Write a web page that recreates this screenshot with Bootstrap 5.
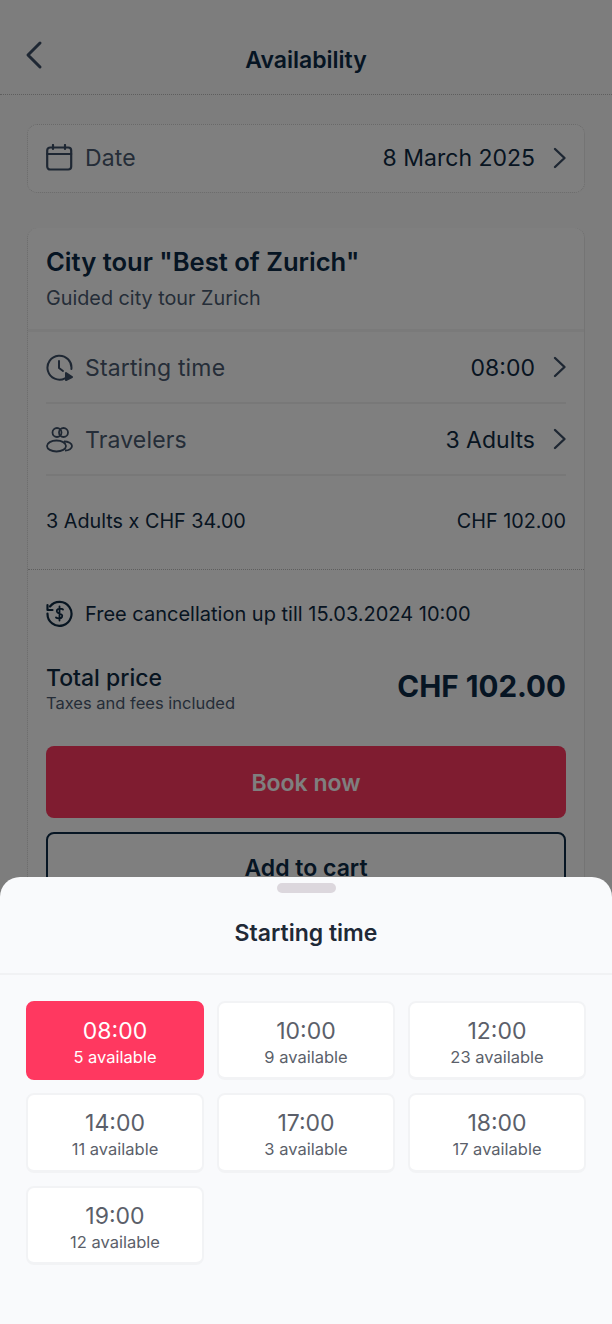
<!DOCTYPE html>
<html lang="en"><head><meta charset="utf-8"><title>Availability</title>
<link href="https://cdn.jsdelivr.net/npm/bootstrap@5.3.0/dist/css/bootstrap.min.css" rel="stylesheet">
<style>
html,body{height:1324px;overflow:hidden}
body{font-family:Inter,"Liberation Sans",sans-serif;background:#fafafa;color:#0f2a43;position:relative;width:612px}
.app-head{height:95px;border-bottom:1px dotted #bdbdbd;position:relative;padding-top:44px}
.app-head h1{font-size:23px;font-weight:600;line-height:32px;margin:0;text-align:center;color:#0c2a46}
.back{position:absolute;left:24px;top:40px}
.panel{margin:0 27px;background:#fff;border:1px dotted #d2d2d2;border-radius:10px}
.date-panel{margin-top:29px;height:69px;padding:0 18px 2px}
.tour-panel{margin-top:35px;height:700px;border-top-style:none}
.lbl{font-size:23px;color:#4a5a70;margin-left:12px;line-height:1;padding-top:2px;letter-spacing:.15px}
.val{font-size:23px;color:#0f2a43;line-height:1;padding-top:2px}
.chev{margin:0 -1px 0 18px}
.rowline{height:72px;margin:0 18px;border-bottom:2px solid #f1f1f1}
.tour-head{height:104px;padding:19px 18px 0;border-bottom:3px solid #f5f5f5}
.tour-head h2{font-size:25.6px;font-weight:600;margin:0;line-height:30px;color:#0c2a46}
.tour-head p{font-size:19.8px;margin:9px 0 0;color:#4a5a70;line-height:24px}
.calc{height:94px;border-bottom:1px dotted #bdbdbd;padding:0 18px 0;font-size:19.8px;color:#0f2a43}
.calc>div{height:92px}
.cancel{padding:0 18px;height:87px;font-size:20px;color:#0f2a43}
.cancel span{margin-left:12px}
.tot{padding:8px 18px 0;height:89px}
.tot b{font-weight:450;font-size:23px;line-height:26px;display:block}
.tot small{font-size:16.5px;color:#4a5a70;line-height:25px;display:block}
.tot strong{font-size:29.6px;font-weight:700;color:#0c2a46;line-height:26px;margin-top:8px}
.act{margin:0 18px;height:72px;border-radius:8px;font-size:23px;font-weight:600;line-height:74px;text-align:center}
.act-book{background:#ff3860;color:#fff}
.act-cart{margin-top:14px;border:2px solid #0c2a46;color:#0c2a46;line-height:68px}
.dim{position:absolute;inset:0;background:rgba(0,0,0,.5)}
.sheet{position:absolute;left:0;right:0;top:877px;bottom:0;background:#f9fafc;border-radius:20px 20px 0 0}
.grip{width:59px;height:10px;border-radius:5px;background:#dcd7dd;margin:6px auto 0}
.sheet h3{font-size:23px;font-weight:600;line-height:32px;text-align:center;color:#1f2937;margin:24px 0 0;padding-bottom:24px;border-bottom:2px solid #f1f2f4}
.slots{display:grid;grid-template-columns:repeat(3,1fr);grid-auto-rows:79.5px;gap:13px;padding:25.700px 26px 0}
.slot{background:#fff;border:2px solid #f2f3f5;border-bottom-width:3px;border-radius:8px;text-align:center;color:#5b5f6a;padding-top:14px}
.slot b{display:block;font-weight:400;font-size:23px;line-height:28px}
.slot i{display:block;font-style:normal;font-size:16.5px;line-height:24px}
.slot.on{background:#ff3860;border-color:#ff3860;color:#fff}
</style></head><body>
<div class="app-head"><svg class="back" width="20" height="30" viewBox="0 0 20 30" fill="none" stroke="#3d4f66" stroke-width="3" stroke-linecap="round" stroke-linejoin="round"><path d="M16 3 4 15l12 12"/></svg><h1>Availability</h1></div>
<div class="panel date-panel d-flex align-items-center">
<svg width="27" height="27" viewBox="0 0 27 27" fill="none" stroke="#3d4f66" stroke-width="2.2" stroke-linecap="round"><rect x="1.2" y="3.5" width="24" height="22" rx="3"/><path d="M1.2 10h24M7 1v4M19 1v4"/></svg>
<span class="lbl">Date</span><span class="val ms-auto">8 March 2025</span>
<svg class="chev" width="14" height="22" viewBox="0 0 14 22" fill="none" stroke="#3d4f66" stroke-width="2.4" stroke-linecap="round" stroke-linejoin="round"><path d="m2 2 9.500 9-9.500 9"/></svg></div>
<div class="panel tour-panel">
<div class="tour-head"><h2>City tour "Best of Zurich"</h2><p>Guided city tour Zurich</p></div>
<div class="rowline d-flex align-items-center">
<svg width="27" height="27" viewBox="0 0 27 27" fill="none" stroke="#3d4f66" stroke-width="2" stroke-linecap="round" stroke-linejoin="round"><path d="M19 24.300A12 12 0 1 1 25.400 15"/><path d="M13 7v7l4 3"/><path d="M20 19l6 4-6 3z" fill="#3d4f66"/></svg>
<span class="lbl">Starting time</span><span class="val ms-auto">08:00</span>
<svg class="chev" width="14" height="22" viewBox="0 0 14 22" fill="none" stroke="#3d4f66" stroke-width="2.4" stroke-linecap="round" stroke-linejoin="round"><path d="m2 2 9.500 9-9.500 9"/></svg></div>
<div class="rowline d-flex align-items-center">
<svg width="27" height="27" viewBox="0 0 27 27" fill="none" stroke="#3d4f66" stroke-width="1.800"><circle cx="11" cy="6.500" r="4.500"/><circle cx="17.500" cy="6.500" r="4.500"/><ellipse cx="10.500" cy="20" rx="9.500" ry="5.500"/><path d="M18 15.500c4.500 0 8 2 8 4.500s-3 4.500-7 4.500"/></svg>
<span class="lbl">Travelers</span><span class="val ms-auto">3 Adults</span>
<svg class="chev" width="14" height="22" viewBox="0 0 14 22" fill="none" stroke="#3d4f66" stroke-width="2.4" stroke-linecap="round" stroke-linejoin="round"><path d="m2 2 9.500 9-9.500 9"/></svg></div>
<div class="calc"><div class="d-flex align-items-center justify-content-between"><span>3 Adults x CHF 34.00</span><span>CHF 102.00</span></div></div>
<div class="cancel d-flex align-items-center">
<svg width="27" height="27" viewBox="0 0 27 27" fill="none" stroke="#0f2a43" stroke-width="2.2" stroke-linecap="round" stroke-linejoin="round"><path d="M4 6.500A12 12 0 1 1 1.500 13.500"/><path d="M1.500 5v5h5"/><path d="M17 9.500c-1-1-5-1.500-6 .5s1 3 2.500 3.500 3.500 1.500 2.500 3.500-5 1.500-6 .5M13.500 6.500v14" stroke-width="1.800"/></svg>
<span>Free cancellation up till 15.03.2024 10:00</span></div>
<div class="tot d-flex justify-content-between"><div><b>Total price</b><small>Taxes and fees included</small></div><strong>CHF 102.00</strong></div>
<div class="act act-book">Book now</div>
<div class="act act-cart">Add to cart</div>
</div>
<div class="dim"></div>
<div class="sheet"><div class="grip"></div><h3>Starting time</h3>
<div class="slots">
<div class="slot on"><b>08:00</b><i>5 available</i></div>
<div class="slot"><b>10:00</b><i>9 available</i></div>
<div class="slot"><b>12:00</b><i>23 available</i></div>
<div class="slot"><b>14:00</b><i>11 available</i></div>
<div class="slot"><b>17:00</b><i>3 available</i></div>
<div class="slot"><b>18:00</b><i>17 available</i></div>
<div class="slot"><b>19:00</b><i>12 available</i></div>
</div></div>
<script src="https://cdn.jsdelivr.net/npm/bootstrap@5.3.0/dist/js/bootstrap.bundle.min.js"></script>
</body></html>
